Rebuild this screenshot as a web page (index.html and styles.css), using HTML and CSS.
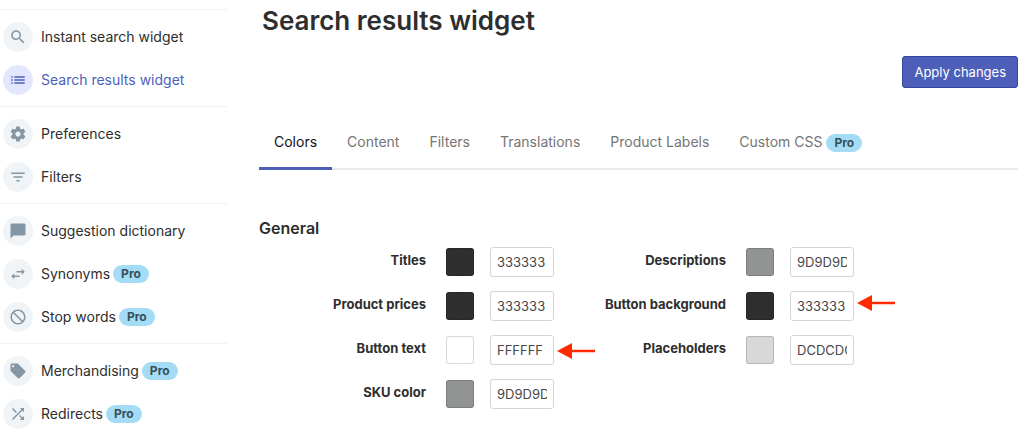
FILE: index.html
```
<!DOCTYPE html>
<html lang="en">
<head>
  <meta charset="UTF-8" />
  <meta name="viewport" content="width=device-width, initial-scale=1.0" />
  <title>Search results widget</title>
  <link rel="stylesheet" href="styles.css">
</head>
<body>
  <nav class="sidebar">
    <div class="nav-group">
      <a href="#" class="nav-item">
        <span class="nav-icon"><svg viewBox="0 0 24 24"><path d="M15.5 14h-.79l-.28-.27C15.41 12.59 16 11.11 16 9.5 16 5.91 13.09 3 9.5 3S3 5.91 3 9.5 5.91 16 9.5 16c1.61 0 3.09-.59 4.23-1.57l.27.28v.79l5 4.99L20.49 19l-4.99-5zm-6 0C7.01 14 5 11.99 5 9.5S7.01 5 9.5 5 14 7.01 14 9.5 11.99 14 9.5 14z"/></svg></span>
        Instant search widget
      </a>
      <a href="#" class="nav-item active">
        <span class="nav-icon"><svg viewBox="0 0 24 24"><path d="M3 13h2v-2H3v2zm0 4h2v-2H3v2zm0-8h2V7H3v2zm4 4h14v-2H7v2zm0 4h14v-2H7v2zM7 7v2h14V7H7z"/></svg></span>
        Search results widget
      </a>
    </div>
    <div class="nav-group">
      <a href="#" class="nav-item">
        <span class="nav-icon"><svg viewBox="0 0 24 24"><path d="M19.43 12.98c.04-.32.07-.64.07-.98s-.03-.66-.07-.98l2.11-1.65c.19-.15.24-.42.12-.64l-2-3.46c-.12-.22-.39-.3-.61-.22l-2.49 1c-.52-.4-1.08-.73-1.69-.98l-.38-2.65C14.46 2.18 14.25 2 14 2h-4c-.25 0-.46.18-.49.42l-.38 2.65c-.61.25-1.17.59-1.69.98l-2.49-1c-.23-.09-.49 0-.61.22l-2 3.46c-.13.22-.07.49.12.64l2.11 1.65c-.04.32-.07.65-.07.98s.03.66.07.98l-2.11 1.65c-.19.15-.24.42-.12.64l2 3.46c.12.22.39.3.61.22l2.49-1c.52.4 1.08.73 1.69.98l.38 2.65c.03.24.24.42.49.42h4c.25 0 .46-.18.49-.42l.38-2.65c.61-.25 1.17-.59 1.69-.98l2.49 1c.23.09.49 0 .61-.22l2-3.46c.12-.22.07-.49-.12-.64l-2.11-1.65zM12 15.5c-1.93 0-3.5-1.57-3.5-3.5s1.57-3.5 3.5-3.5 3.5 1.57 3.5 3.5-1.57 3.5-3.5 3.5z"/></svg></span>
        Preferences
      </a>
      <a href="#" class="nav-item">
        <span class="nav-icon"><svg viewBox="0 0 24 24"><path d="M10 18h4v-2h-4v2zM3 6v2h18V6H3zm3 7h12v-2H6v2z"/></svg></span>
        Filters
      </a>
    </div>
    <div class="nav-group">
      <a href="#" class="nav-item">
        <span class="nav-icon"><svg viewBox="0 0 24 24"><path d="M20 2H4c-1.1 0-2 .9-2 2v18l4-4h14c1.1 0 2-.9 2-2V4c0-1.1-.9-2-2-2z"/></svg></span>
        Suggestion dictionary
      </a>
      <a href="#" class="nav-item">
        <span class="nav-icon"><svg viewBox="0 0 24 24"><path d="M6.99 11L3 15l3.99 4v-3H14v-2H6.99v-3zM21 9l-3.99-4v3H10v2h7.01v3L21 9z"/></svg></span>
        Synonyms <span class="badge">Pro</span>
      </a>
      <a href="#" class="nav-item">
        <span class="nav-icon"><svg class="flip" viewBox="0 0 24 24"><path d="M12 2C6.48 2 2 6.48 2 12s4.48 10 10 10 10-4.48 10-10S17.52 2 12 2zM4 12c0-4.42 3.58-8 8-8 1.85 0 3.55.63 4.9 1.69L5.69 16.9C4.63 15.55 4 13.85 4 12zm8 8c-1.85 0-3.55-.63-4.9-1.69L18.31 7.1C19.37 8.45 20 10.15 20 12c0 4.42-3.58 8-8 8z"/></svg></span>
        Stop words <span class="badge">Pro</span>
      </a>
    </div>
    <div class="nav-group">
      <a href="#" class="nav-item">
        <span class="nav-icon"><svg viewBox="0 0 24 24"><path d="M21.41 11.58l-9-9C12.05 2.22 11.55 2 11 2H4c-1.1 0-2 .9-2 2v7c0 .55.22 1.05.59 1.42l9 9c.36.36.86.58 1.41.58.55 0 1.05-.22 1.41-.59l7-7c.37-.36.59-.86.59-1.41 0-.55-.23-1.06-.59-1.42zM5.5 7C4.67 7 4 6.33 4 5.5S4.67 4 5.5 4 7 4.67 7 5.5 6.33 7 5.5 7z"/></svg></span>
        Merchandising <span class="badge">Pro</span>
      </a>
      <a href="#" class="nav-item">
        <span class="nav-icon"><svg viewBox="0 0 24 24"><path d="M10.59 9.17L5.41 4 4 5.41l5.17 5.17 1.42-1.41zM14.5 4l2.04 2.04L4 18.59 5.41 20 17.96 7.46 20 9.5V4h-5.5zm.33 9.41l-1.41 1.41 3.13 3.13L14.5 20H20v-5.5l-2.04 2.04-3.13-3.13z"/></svg></span>
        Redirects <span class="badge">Pro</span>
      </a>
    </div>
  </nav>

  <main class="content">
    <h1>Search results widget</h1>
    <div class="actions">
      <button type="button" class="apply-button">Apply changes</button>
    </div>

    <div class="tabs">
      <a href="#" class="tab active">Colors</a>
      <a href="#" class="tab">Content</a>
      <a href="#" class="tab">Filters</a>
      <a href="#" class="tab">Translations</a>
      <a href="#" class="tab">Product Labels</a>
      <a href="#" class="tab">Custom CSS <span class="badge">Pro</span></a>
    </div>

    <h2>General</h2>
    <form class="colors">
      <div class="field">
        <label for="titles">Titles</label>
        <button type="button" class="swatch dark" aria-label="Pick titles color"></button>
        <input type="text" id="titles" value="333333">
      </div>
      <div class="field">
        <label for="descriptions">Descriptions</label>
        <button type="button" class="swatch gray" aria-label="Pick descriptions color"></button>
        <input type="text" id="descriptions" value="9D9D9D">
      </div>
      <div class="field">
        <label for="prices">Product prices</label>
        <button type="button" class="swatch dark" aria-label="Pick product prices color"></button>
        <input type="text" id="prices" value="333333">
      </div>
      <div class="field">
        <label for="button-bg">Button background</label>
        <button type="button" class="swatch dark" aria-label="Pick button background color"></button>
        <input type="text" id="button-bg" value="333333">
        <svg class="arrow arrow-up" viewBox="0 0 38 16"><path d="M0 8L15 0v6.7h23v2.6H15V16z"/></svg>
      </div>
      <div class="field">
        <label for="button-text">Button text</label>
        <button type="button" class="swatch white" aria-label="Pick button text color"></button>
        <input type="text" id="button-text" value="FFFFFF">
        <svg class="arrow" viewBox="0 0 38 16"><path d="M0 8L15 0v6.7h23v2.6H15V16z"/></svg>
      </div>
      <div class="field">
        <label for="placeholders">Placeholders</label>
        <button type="button" class="swatch light" aria-label="Pick placeholders color"></button>
        <input type="text" id="placeholders" value="DCDCDC">
      </div>
      <div class="field">
        <label for="sku">SKU color</label>
        <button type="button" class="swatch gray" aria-label="Pick SKU color"></button>
        <input type="text" id="sku" value="9D9D9D">
      </div>
    </form>
  </main>
</body>
</html>
```
FILE: styles.css
```
* {
  box-sizing: border-box;
}

body {
  display: flex;
  align-items: flex-start;
  margin: 0;
  background: #fff;
  color: #2e2e2e;
  font-family: Inter, sans-serif;
  font-size: 14px;
  line-height: 20px;
}

/* Sidebar */
.sidebar {
  flex: 0 0 227px;
  padding-top: 9px;
}

.nav-group {
  padding: 5px 0;
  border-top: 1px solid #f1f2f3;
}

.nav-item {
  display: flex;
  align-items: center;
  height: 43px;
  padding-left: 3px;
  color: #2e2e2e;
  text-decoration: none;
}

.nav-icon {
  display: flex;
  align-items: center;
  justify-content: center;
  width: 30px;
  height: 30px;
  margin-right: 8px;
  border-radius: 50%;
  background: #f0f4f7;
}

.nav-icon svg {
  width: 18px;
  height: 18px;
  fill: #8495a3;
}

.nav-icon .flip {
  transform: scaleX(-1);
}

.nav-item.active {
  color: #4e5fba;
}

.nav-item.active .nav-icon {
  background: #e3e7fe;
}

.nav-item.active svg {
  fill: #4e5fba;
}

.badge {
  display: inline-block;
  margin-left: 3px;
  padding: 0 8px;
  border-radius: 9px;
  background: #a4dcf6;
  color: #36505c;
  font-size: 12px;
  font-weight: 700;
  line-height: 18px;
}

/* Main area */
.content {
  flex: 1;
  padding: 5px 13px 0 32px;
}

h1 {
  margin: 0 0 19px 3px;
  font-size: 26px;
  font-weight: 600;
  line-height: 32px;
}

.actions {
  display: flex;
  justify-content: flex-end;
}

.apply-button {
  height: 32px;
  padding: 0 11px;
  border: 1px solid #3445a0;
  border-radius: 3px;
  background: #4e5fba;
  color: #fff;
  font-family: inherit;
  font-size: 13px;
}

.tabs {
  display: flex;
  margin-top: 28px;
  border-bottom: 2px solid #e9e9e9;
}

.tab {
  height: 54px;
  margin-bottom: -2px;
  padding: 16px 15px 0;
  border-bottom: 3px solid transparent;
  color: #757575;
  text-decoration: none;
  white-space: nowrap;
}

.tab.active {
  border-color: #4e5fba;
  color: #111;
}

.tab .badge {
  margin-left: 0;
}

h2 {
  margin: 48px 0 9px;
  font-size: 16px;
  font-weight: 600;
  line-height: 20px;
}

/* Color fields */
.colors {
  display: grid;
  grid-template-columns: 295px 295px;
  gap: 14px 5px;
}

.field {
  position: relative;
  display: flex;
  align-items: center;
  height: 30px;
}

.field label {
  flex: 1;
  padding: 0 20px 4px 0;
  font-size: 13px;
  font-weight: 700;
  text-align: right;
  white-space: nowrap;
}

.swatch {
  width: 28px;
  height: 28px;
  margin-right: 16px;
  padding: 0;
  border: 1px solid rgba(0, 0, 0, 0.15);
  border-radius: 3px;
}

.swatch.dark {
  background: #2e2e2e;
}

.swatch.gray {
  background: #929493;
}

.swatch.white {
  background: #fff;
}

.swatch.light {
  background: #d8d8d8;
}

.field input {
  width: 64px;
  height: 30px;
  padding: 0 6px;
  border: 1px solid #d5d5d5;
  border-radius: 3px;
  background: #fff;
  color: #484848;
  font-family: inherit;
  font-size: 13px;
}

.arrow {
  position: absolute;
  top: 8px;
  left: 298px;
  width: 38px;
  height: 16px;
  fill: #ff2a00;
}

.arrow-up {
  top: 4px;
}
```
